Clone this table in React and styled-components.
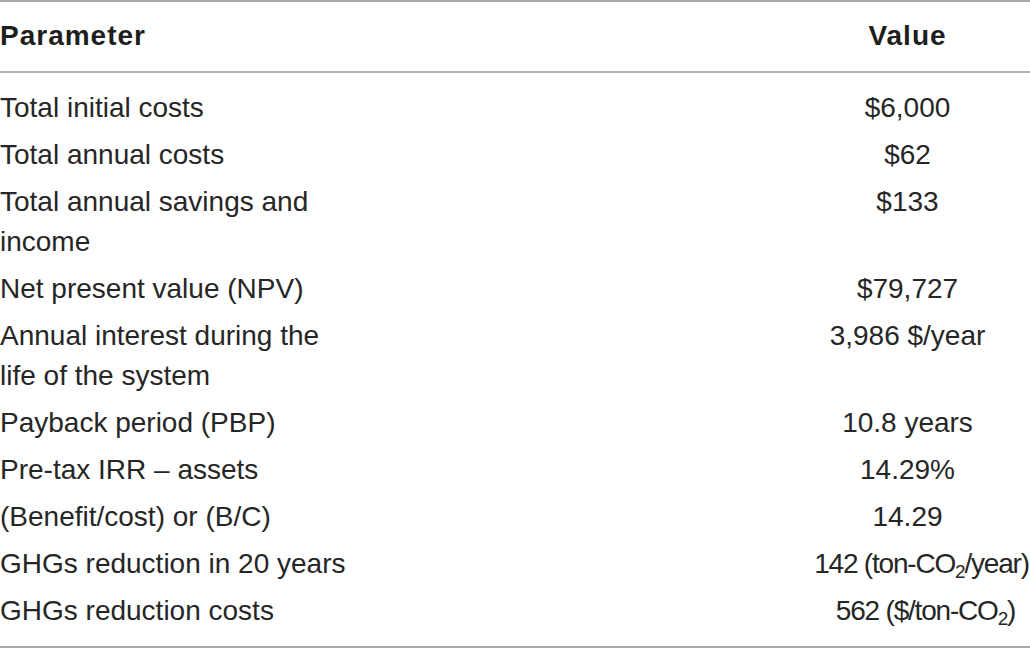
import React from 'react';
import styled, { createGlobalStyle } from 'styled-components';

const Sub = styled.span`
    font-size: 0.68em;
    vertical-align: -0.28em;
    line-height: 0;
`;

const rows = [
    { param: 'Total initial costs', value: '$6,000' },
    { param: 'Total annual costs', value: '$62' },
    { param: 'Total annual savings and income', value: '$133' },
    { param: 'Net present value (NPV)', value: '$79,727' },
    { param: 'Annual interest during the life of the system', value: '3,986 $/year' },
    { param: 'Payback period (PBP)', value: '10.8 years' },
    { param: 'Pre-tax IRR – assets', value: '14.29%' },
    { param: '(Benefit/cost) or (B/C)', value: '14.29' },
    { param: 'GHGs reduction in 20 years', value: <>142 (ton-CO<Sub>2</Sub>/year)</>, nudge: 28, tight: true },
    { param: 'GHGs reduction costs', value: <>562 ($/ton-CO<Sub>2</Sub>)</>, nudge: 36, tight: true },
];

export default function App() {
    return (
        <>
            <GlobalStyle />
            <Table>
                <HeadRow>
                    <HeadCell>Parameter</HeadCell>
                    <HeadCell $center>Value</HeadCell>
                </HeadRow>
                <Body>
                    {rows.map((r, i) => (
                        <Row key={i}>
                            <ParamCell>{r.param}</ParamCell>
                            <ValueCell $nudge={r.nudge} $tight={r.tight}>{r.value}</ValueCell>
                        </Row>
                    ))}
                </Body>
            </Table>
        </>
    );
}

const GlobalStyle = createGlobalStyle`
    body {
        margin: 0;
        background: #fff;
        font-family: "Liberation Sans", Arial, sans-serif;
        color: #262626;
    }
`;

const Table = styled.div`
    width: 1030px;
    border-top: 2px solid #a9a9a9;
    border-bottom: 2px solid #a9a9a9;
    box-sizing: border-box;
`;

const HeadRow = styled.div`
    display: grid;
    grid-template-columns: 785px 245px;
    padding: 14px 0 15px;
    border-bottom: 2px solid #b3b3b3;
`;

const HeadCell = styled.div`
    font-size: 28px;
    line-height: 40px;
    font-weight: bold;
    letter-spacing: 1px;
    color: #1e1e1e;
    text-align: ${({ $center }) => ($center ? 'center' : 'left')};
`;

const Body = styled.div`
    display: flex;
    flex-direction: column;
    padding: 11px 0 12px;
`;

const Row = styled.div`
    display: grid;
    grid-template-columns: 785px 245px;
    padding: 3.5px 0;
    font-size: 28px;
    line-height: 40px;
`;

const ParamCell = styled.div`
    max-width: 356px;
`;

const ValueCell = styled.div`
    text-align: center;
    white-space: nowrap;
    letter-spacing: ${({ $tight }) => ($tight ? '-1.2px' : 'normal')};
    padding-left: ${({ $nudge }) => ($nudge ? `${$nudge}px` : '0')};
`;
